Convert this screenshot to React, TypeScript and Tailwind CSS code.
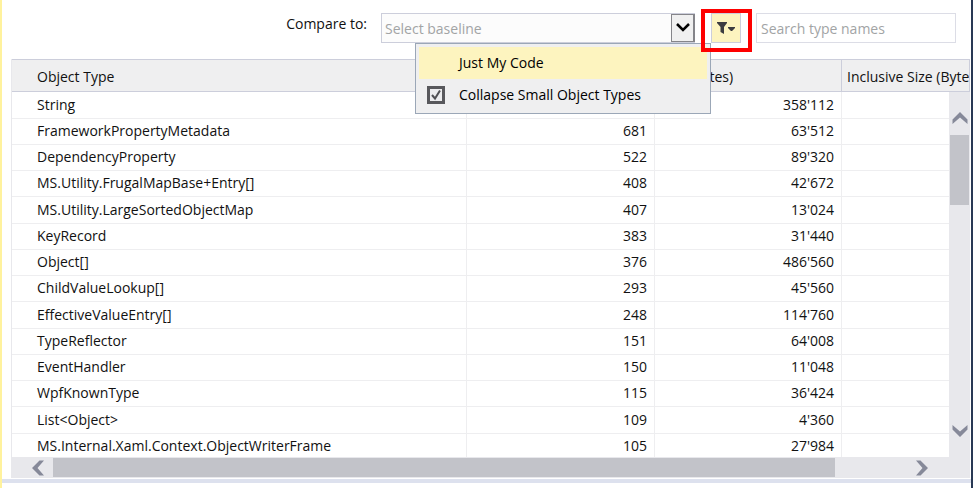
import { useState } from "react";

const rows = [
  ["String", "", "358'112"],
  ["FrameworkPropertyMetadata", "681", "63'512"],
  ["DependencyProperty", "522", "89'320"],
  ["MS.Utility.FrugalMapBase+Entry[]", "408", "42'672"],
  ["MS.Utility.LargeSortedObjectMap", "407", "13'024"],
  ["KeyRecord", "383", "31'440"],
  ["Object[]", "376", "486'560"],
  ["ChildValueLookup[]", "293", "45'560"],
  ["EffectiveValueEntry[]", "248", "114'760"],
  ["TypeReflector", "151", "64'008"],
  ["EventHandler", "150", "11'048"],
  ["WpfKnownType", "115", "36'424"],
  ["List<Object>", "109", "4'360"],
  ["MS.Internal.Xaml.Context.ObjectWriterFrame", "105", "27'984"],
];

function Chevron({ className }: { className: string }) {
  return (
    <svg viewBox="0 0 16 12" className={`h-3 w-4 fill-[#868999] ${className}`} aria-hidden="true">
      <path d="M8 0 15.500 7.500V12L8 5.500.5 12V7.500Z" />
    </svg>
  );
}

function MenuItem({ label, checked, onToggle }: { label: string; checked: boolean; onToggle: () => void }) {
  return (
    <label className="flex h-8 items-center gap-3.5 px-2 text-black first:bg-[#fdf4bf]">
      <span className="grid size-[18px] place-items-center">
        <input
          type="checkbox"
          checked={checked}
          onChange={onToggle}
          className="peer col-start-1 row-start-1 size-[18px] appearance-none border-transparent checked:border-[3px] checked:border-[#58585c] checked:bg-[#ececee]"
        />
        <svg viewBox="0 0 12 12" className="col-start-1 row-start-1 hidden size-3 peer-checked:block" aria-hidden="true">
          <path d="M2 6 5 9.500 10 1.500" fill="none" stroke="#505054" strokeWidth="2" />
        </svg>
      </span>
      {label}
    </label>
  );
}

function FilterMenu() {
  const [justMyCode, setJustMyCode] = useState(false);
  const [collapse, setCollapse] = useState(true);
  return (
    <div className="relative ml-4">
      <button
        type="button"
        aria-label="Filter"
        className="flex h-[30px] w-[30px] items-center justify-center border border-[#cccedb] bg-[#fdf4bf]"
      >
        <svg viewBox="0 0 18 12" className="h-3 w-[18px] fill-[#3c3c40]" aria-hidden="true">
          <path d="M0 0h10v1L7 5v7L3.500 10V5L0 1ZM11 5h7v1l-3 3h-1l-3-3Z" />
        </svg>
      </button>
      <div className="absolute top-full right-full w-[296px] border border-[#9ba7b7] bg-[#efeff0] px-[3px] pt-[3px] pb-0.5">
        <MenuItem label="Just My Code" checked={justMyCode} onToggle={() => setJustMyCode(!justMyCode)} />
        <MenuItem label="Collapse Small Object Types" checked={collapse} onToggle={() => setCollapse(!collapse)} />
      </div>
      <div className="pointer-events-none absolute -top-1 -right-[11px] -bottom-[9px] -left-2.5 border-4 border-[#fe0000]" />
    </div>
  );
}

function Toolbar() {
  return (
    <div className="relative z-10 flex h-[59px] items-start justify-end pt-[13px] pr-[15px]">
      <label htmlFor="baseline" className="mr-3.5 leading-[22px]">
        Compare to:
      </label>
      <div className="grid w-[314px]">
        <select
          id="baseline"
          className="col-start-1 row-start-1 h-[30px] appearance-none border border-[#cccedb] bg-[#fcfcfc] px-[3px] pt-0.5 text-[#a2a4a5]"
        >
          <option>Select baseline</option>
        </select>
        <span className="pointer-events-none col-start-1 row-start-1 flex h-7 w-6 items-center justify-center self-center justify-self-end border border-r-2 border-[#85858a] bg-[#f0f0f0]">
          <svg viewBox="0 0 14 10" className="h-2.5 w-3.5" aria-hidden="true">
            <path d="M1 1 7 7 13 1" fill="none" stroke="#000" strokeWidth="2.500" />
          </svg>
        </span>
      </div>
      <FilterMenu />
      <input
        type="text"
        aria-label="Search type names"
        placeholder="Search type names"
        className="ml-[15px] h-[30px] w-[200px] border border-[#dcdde6] bg-white px-1 placeholder:text-[#a2a4a5]"
      />
    </div>
  );
}

const head = "h-[33px] overflow-hidden whitespace-nowrap border-y border-[#cccedb] bg-[#efeff0] pt-0.5 text-left font-normal";
const cell = "border-b border-[#eeeef0] p-0 pb-px whitespace-nowrap";

function TypeTable() {
  return (
    <div className="relative h-[398px] overflow-hidden border-l border-[#e8e8ec]">
      <table className="w-full table-fixed border-separate border-spacing-0">
        <colgroup>
          <col />
          <col className="w-[188px]" />
          <col className="w-[187px]" />
          <col className="w-[128px]" />
        </colgroup>
        <thead>
          <tr>
            <th className={`${head} border-r pl-[25px]`}>Object Type</th>
            <th className={`${head} border-r pl-[5px]`}>Count</th>
            <th className={`${head} border-r pl-[5px]`}>Size (Bytes)</th>
            <th className={`${head} border-r pl-[5px]`}>Inclusive Size (Bytes)</th>
          </tr>
        </thead>
        <tbody>
          {rows.map(([name, count, size]) => (
            <tr key={name} className="h-[26px] [&:nth-child(4n+1)]:h-[27px]">
              <td className={`${cell} border-r pl-[25px]`}>{name}</td>
              <td className={`${cell} border-r pr-[7px] text-right`}>{count}</td>
              <td className={`${cell} border-r pr-[7px] text-right`}>{size}</td>
              <td className={cell} />
            </tr>
          ))}
        </tbody>
      </table>
      <div className="absolute top-[33px] right-0 bottom-0 flex w-[21px] flex-col items-center bg-[#e8e8ec] pt-5 pb-5">
        <Chevron className="" />
        <div className="mt-[11px] h-[70px] w-[19px] bg-[#c2c3c9]" />
        <Chevron className="mt-auto rotate-180" />
      </div>
    </div>
  );
}

export default function App() {
  return (
    <div className="flex min-h-screen bg-white font-['Open_Sans','Noto_Sans',sans-serif] text-[14px] leading-5 text-[#111]">
      <div className="w-0.5 bg-[#fff29d]" />
      <main className="min-w-0 flex-1">
        <Toolbar />
        <div className="mr-px ml-[9px]">
          <TypeTable />
          <div className="flex h-[21px] items-center bg-[#e8e8ec] pl-[19px] pr-10">
            <Chevron className="-rotate-90" />
            <div className="ml-[7px] h-[19px] min-w-0 flex-1 bg-[#c2c3c9]" />
            <Chevron className="ml-[79px] rotate-90" />
          </div>
        </div>
        <div className="mt-px h-1 bg-[#dde1ee]" />
      </main>
      <div className="w-0.5 bg-[#293955]" />
    </div>
  );
}
